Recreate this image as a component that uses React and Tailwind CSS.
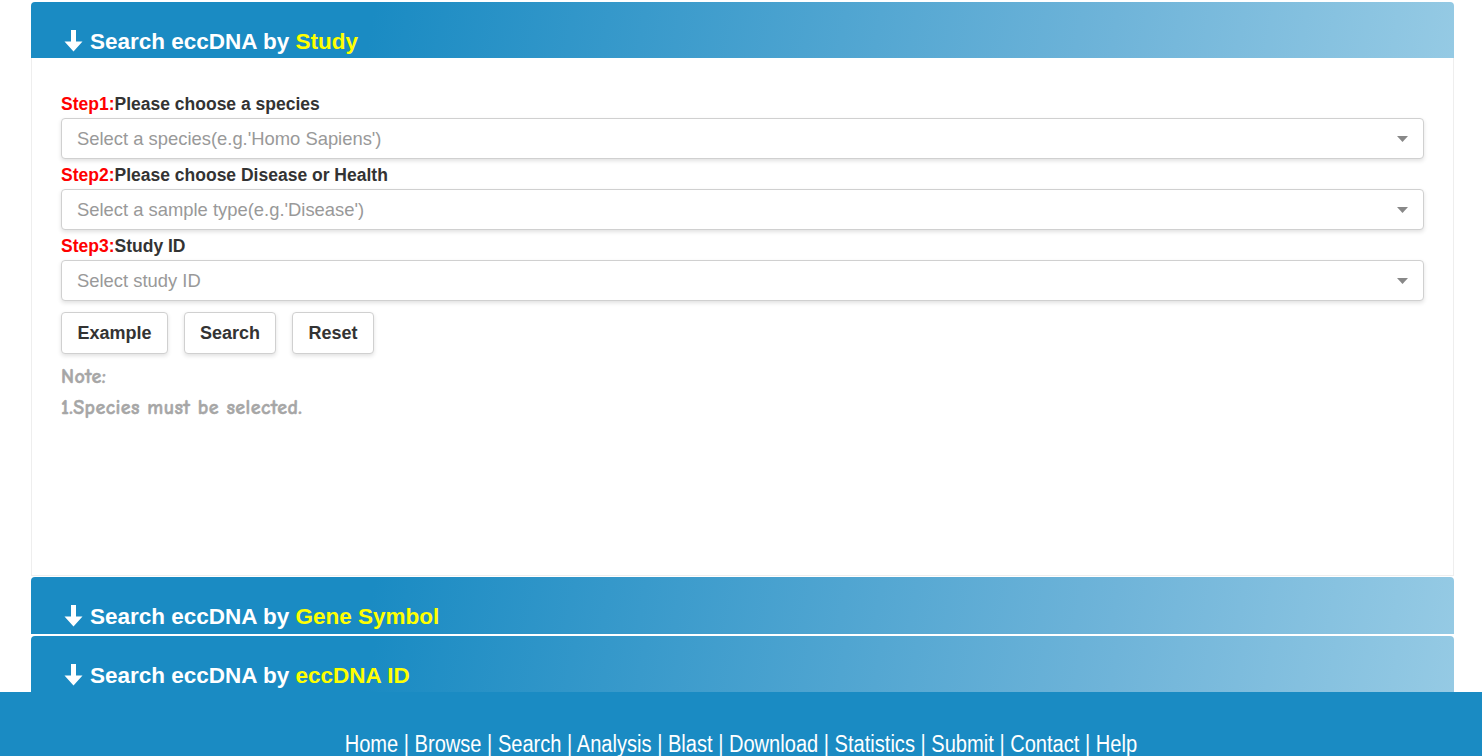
import React from "react";

const Arrow = () => (
  <svg width="19" height="22" viewBox="0 0 19 22" className="inline-block mr-[7px] -mt-[3px]">
    <path d="M7 0h5v11.5h6.5L9.5 21.5 0.5 11.5H7z" fill="white" />
  </svg>
);

const Header = ({ hl, h }) => (
  <div
    className={`${h} pl-[33px] pt-[27px] rounded-t-[4px] bg-[linear-gradient(100deg,#1a8bc3_24%,#6fb4d9_76%,#95cae4_100%)]`}
  >
    <div className="text-[22.5px] font-bold text-white leading-[26px] flex items-center">
      <Arrow />
      <span>Search eccDNA by&nbsp;</span>
      <span className="text-[#ffff00]">{hl}</span>
    </div>
  </div>
);

const Select = ({ ph }) => (
  <div className="h-[41px] rounded-[4px] border border-[#d0d0d0] shadow-[0_2px_4px_rgba(0,0,0,0.12)] flex items-center justify-between pl-[15px] pr-[15px] bg-white">
    <span className="text-[18.4px] text-[#999]">{ph}</span>
    <svg width="11" height="6" viewBox="0 0 11 6"><path d="M0 0h11L5.5 6z" fill="#888" /></svg>
  </div>
);

const Label = ({ n, text }) => (
  <div className="text-[17.5px] font-bold leading-[22px] text-[#333] mb-[3px]">
    <span className="text-[#ff0000]">Step{n}:</span>
    {text}
  </div>
);

const Btn = ({ children, w }) => (
  <button className={`h-[42px] ${w} rounded-[4px] border border-[#d0d0d0] bg-white shadow-[0_2px_4px_rgba(0,0,0,0.12)] text-[18px] font-bold text-[#333]`}>
    {children}
  </button>
);

export default function App() {
  return (
    <div className="w-[1482px] h-[756px] overflow-hidden bg-white" style={{ fontFamily: "'Liberation Sans', Arial, sans-serif" }}>
      <div className="pl-[31px] pr-[28px] pt-[2px]">
        <Header hl="Study" h="h-[56px]" />
        <div className="h-[518px] border border-t-0 border-[#eee] pt-[35px] px-[29px]">
          <Label n="1" text="Please choose a species" />
          <Select ph="Select a species(e.g.'Homo Sapiens')" />
          <div className="h-[5px]" />
          <Label n="2" text="Please choose Disease or Health" />
          <Select ph="Select a sample type(e.g.'Disease')" />
          <div className="h-[5px]" />
          <Label n="3" text="Study ID" />
          <Select ph="Select study ID" />
          <div className="flex gap-[16px] mt-[11px]">
            <Btn w="w-[107px]">Example</Btn>
            <Btn w="w-[92px]">Search</Btn>
            <Btn w="w-[82px]">Reset</Btn>
          </div>
          <div className="mt-[7px] text-[20px] tracking-[0.4px] font-bold text-[#a6a6a6] leading-[31px] [-webkit-text-stroke:0.5px_#a6a6a6]" style={{ fontFamily: "'Comic Sans MS', 'Comic Neue', cursive" }}>
            <div>Note:</div>
            <div>1.Species must be selected.</div>
          </div>
        </div>
        <div className="h-[1px]" />
        <Header hl="Gene Symbol" h="h-[57px]" />
        <div className="h-[2px]" />
        <Header hl="eccDNA ID" h="h-[56px]" />
      </div>
      <div className="h-[70px] bg-[#1a8bc3] pt-[39px] flex justify-center">
        <span className="text-[23px] leading-[26px] text-white whitespace-nowrap inline-block scale-x-[0.873]">
          Home | Browse | Search | Analysis | Blast | Download | Statistics | Submit | Contact | Help
        </span>
      </div>
    </div>
  );
}
